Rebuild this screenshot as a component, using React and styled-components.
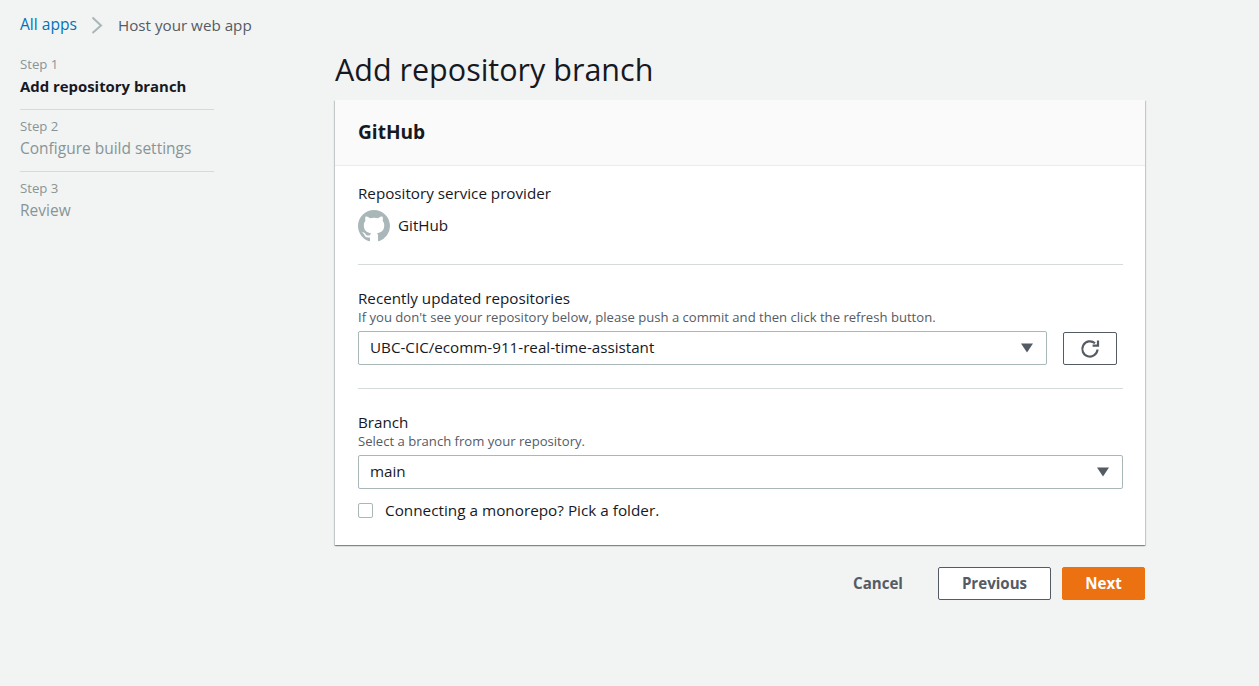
import React from "react";
import styled, { createGlobalStyle } from "styled-components";

const GlobalStyle = createGlobalStyle`
  html, body {
    margin: 0;
    padding: 0;
    background: #f2f3f3;
    font-family: "Open Sans", "Noto Sans", "Liberation Sans", sans-serif;
    color: #16191f;
  }
  * { box-sizing: border-box; }
`;

const Page = styled.div`
  width: 1259px;
  height: 686px;
  overflow: hidden;
  padding: 14px 20px 0;
`;
const Breadcrumbs = styled.nav`
  display: flex;
  align-items: center;
  height: 20px;
  font-size: 15.2px;
  line-height: 20px;
`;
const CrumbLink = styled.a`
  color: #0073bb;
  font-size: 15.6px;
  text-decoration: none;
`;
const CrumbCurrent = styled.span`
  color: #545b64;
  margin-top: 1px;
`;
const CrumbArrow = styled.svg`
  width: 12px;
  height: 18px;
  margin: 1px 15px 0 14px;
`;
const Layout = styled.div`
  display: flex;
  margin-top: 20px;
`;
const Sidebar = styled.aside`
  width: 194px;
  flex: none;
`;
const Step = styled.div`
  height: 56px;
  margin-bottom: 6px;
  border-bottom: ${(p) => (p.$last ? "none" : "1px solid #d5dbdb")};
`;
const StepLabel = styled.div`
  font-size: 13.2px;
  line-height: 20px;
  color: #879596;
`;
const StepName = styled.div`
  font-size: ${(p) => (p.$active ? "14.9px" : "15.5px")};
  line-height: 22px;
  margin-top: 1px;
  font-weight: ${(p) => (p.$active ? 700 : 400)};
  color: ${(p) => (p.$active ? "#16191f" : "#879596")};
`;
const Main = styled.main`
  width: 810px;
  margin-left: 121px;
  margin-top: -5px;
`;
const Title = styled.h1`
  margin: 0;
  font-size: 30.5px;
  font-weight: 400;
  line-height: 40px;
  height: 51px;
`;
const Card = styled.section`
  background: #fff;
  box-shadow: 0 1px 1px 0 rgba(0, 28, 36, 0.3), 1px 1px 1px 0 rgba(0, 28, 36, 0.15),
    -1px 1px 1px 0 rgba(0, 28, 36, 0.15);
  height: 445px;
`;
const CardHeader = styled.header`
  height: 66px;
  padding: 0 23px 2px;
  display: flex;
  align-items: center;
  background: #fafafa;
  border-bottom: 1px solid #eaeded;
  font-size: 19.1px;
  font-weight: 700;
`;
const CardBody = styled.div`
  padding: 0 22px 0 23px;
`;
const Section = styled.div`
  padding-top: ${(p) => p.$top}px;
  height: ${(p) => p.$height}px;
  border-bottom: ${(p) => (p.$plain ? "none" : "1px solid #d5dbdb")};
`;
const Label = styled.div`
  font-size: 15.2px;
  line-height: 20px;
`;
const Hint = styled.div`
  font-size: 13.1px;
  line-height: 17px;
  margin-top: 1px;
  color: #545b64;
`;
const Provider = styled.div`
  display: flex;
  align-items: center;
  gap: 8px;
  margin-top: 7px;
  font-size: 15.2px;
`;
const ProviderName = styled.span`
  margin-top: -2px;
`;
const Row = styled.div`
  display: flex;
  align-items: flex-start;
  gap: 16px;
  margin-top: 5px;
  padding-right: ${(p) => p.$inset || 0}px;
`;
const Select = styled.div`
  flex: 1;
  height: 34px;
  border: 1px solid #aab7b8;
  border-radius: 2px;
  background: #fff;
  padding: 0 11px 2px;
  display: flex;
  align-items: center;
  justify-content: space-between;
  font-size: 15.2px;
`;
const Caret = styled.svg`
  width: 14px;
  height: 10px;
  margin: 2px 1px 0 0;
`;
const IconButton = styled.button`
  width: 54px;
  height: 33px;
  margin-top: 1px;
  border: 1px solid #545b64;
  border-radius: 2px;
  background: #fff;
  display: flex;
  align-items: center;
  justify-content: center;
  padding: 0;
`;
const CheckRow = styled.label`
  display: flex;
  align-items: center;
  gap: 12px;
  margin-top: 11px;
  font-size: 15.3px;
  line-height: 20px;
`;
const CheckBox = styled.span`
  width: 15px;
  height: 15px;
  border: 1px solid #aab7b8;
  border-radius: 2px;
  background: #fff;
`;
const Actions = styled.div`
  display: flex;
  justify-content: flex-end;
  align-items: center;
  margin-top: 22px;
`;
const Button = styled.button`
  height: 33px;
  width: ${(p) => p.$width}px;
  margin-left: ${(p) => p.$gap}px;
  border-radius: 2px;
  border: 1px solid ${(p) => (p.$primary ? "#ec7211" : p.$ghost ? "transparent" : "#545b64")};
  background: ${(p) => (p.$primary ? "#ec7211" : p.$ghost ? "transparent" : "#fff")};
  color: ${(p) => (p.$primary ? "#fff" : "#545b64")};
  font-family: inherit;
  font-size: 15.1px;
  font-weight: 700;
  padding: 0 0 2px;
`;

const GithubIcon = () => (
  <svg width="32" height="32" viewBox="0 0 16 16" fill="#aab7b8">
    <path d="M8 0C3.58 0 0 3.58 0 8c0 3.54 2.29 6.53 5.47 7.59.4.07.55-.17.55-.38 0-.19-.01-.82-.01-1.49-2.01.37-2.53-.49-2.69-.94-.09-.23-.48-.94-.82-1.13-.28-.15-.68-.52-.01-.53.63-.01 1.08.58 1.23.82.72 1.21 1.87.87 2.33.66.07-.52.28-.87.51-1.07-1.78-.2-3.64-.89-3.64-3.95 0-.87.31-1.59.82-2.15-.08-.2-.36-1.02.08-2.12 0 0 .67-.21 2.2.82.64-.18 1.32-.27 2-.27.68 0 1.36.09 2 .27 1.53-1.04 2.2-.82 2.2-.82.44 1.1.16 1.92.08 2.12.51.56.82 1.27.82 2.15 0 3.07-1.87 3.75-3.65 3.95.29.25.54.73.54 1.48 0 1.07-.01 1.93-.01 2.2 0 .21.15.46.55.38A8.013 8.013 0 0016 8c0-4.42-3.58-8-8-8z" />
  </svg>
);

const CaretIcon = () => (
  <Caret viewBox="0 0 14 10">
    <path d="M1 0.5h12L7 9.5z" fill="#545b64" />
  </Caret>
);

const RefreshIcon = () => (
  <svg width="20" height="20" viewBox="0 0 20 20" fill="none">
    <path d="M17.5 10.5a7.6 7.6 0 1 1-2.5-6.2" stroke="#545b64" strokeWidth="2.2" />
    <path d="M18 1.5v5.2h-5.4" stroke="#545b64" strokeWidth="2.2" />
  </svg>
);

const steps = [
  { label: "Step 1", name: "Add repository branch", active: true },
  { label: "Step 2", name: "Configure build settings" },
  { label: "Step 3", name: "Review", last: true },
];

export default function App() {
  return (
    <Page>
      <GlobalStyle />
      <Breadcrumbs>
        <CrumbLink href="#">All apps</CrumbLink>
        <CrumbArrow viewBox="0 0 12 18" fill="none">
          <path d="M1.5 1.5L10 9.5 1.5 17" stroke="#aab7b8" strokeWidth="2" />
        </CrumbArrow>
        <CrumbCurrent>Host your web app</CrumbCurrent>
      </Breadcrumbs>
      <Layout>
        <Sidebar>
          {steps.map((s) => (
            <Step key={s.label} $last={s.last}>
              <StepLabel>{s.label}</StepLabel>
              <StepName $active={s.active}>{s.name}</StepName>
            </Step>
          ))}
        </Sidebar>
        <Main>
          <Title>Add repository branch</Title>
          <Card>
            <CardHeader>GitHub</CardHeader>
            <CardBody>
              <Section $top={17} $height={99}>
                <Label>Repository service provider</Label>
                <Provider>
                  <GithubIcon />
                  <ProviderName>GitHub</ProviderName>
                </Provider>
              </Section>
              <Section $top={23} $height={124}>
                <Label>Recently updated repositories</Label>
                <Hint>If you don't see your repository below, please push a commit and then click the refresh button.</Hint>
                <Row $inset={6}>
                  <Select>
                    UBC-CIC/ecomm-911-real-time-assistant
                    <CaretIcon />
                  </Select>
                  <IconButton>
                    <RefreshIcon />
                  </IconButton>
                </Row>
              </Section>
              <Section $top={23} $height={150} $plain>
                <Label>Branch</Label>
                <Hint>Select a branch from your repository.</Hint>
                <Row>
                  <Select>
                    main
                    <CaretIcon />
                  </Select>
                </Row>
                <CheckRow>
                  <CheckBox />
                  Connecting a monorepo? Pick a folder.
                </CheckRow>
              </Section>
            </CardBody>
          </Card>
          <Actions>
            <Button $ghost $width={80} $gap={0}>Cancel</Button>
            <Button $width={113} $gap={20}>Previous</Button>
            <Button $primary $width={83} $gap={11}>Next</Button>
          </Actions>
        </Main>
      </Layout>
    </Page>
  );
}
